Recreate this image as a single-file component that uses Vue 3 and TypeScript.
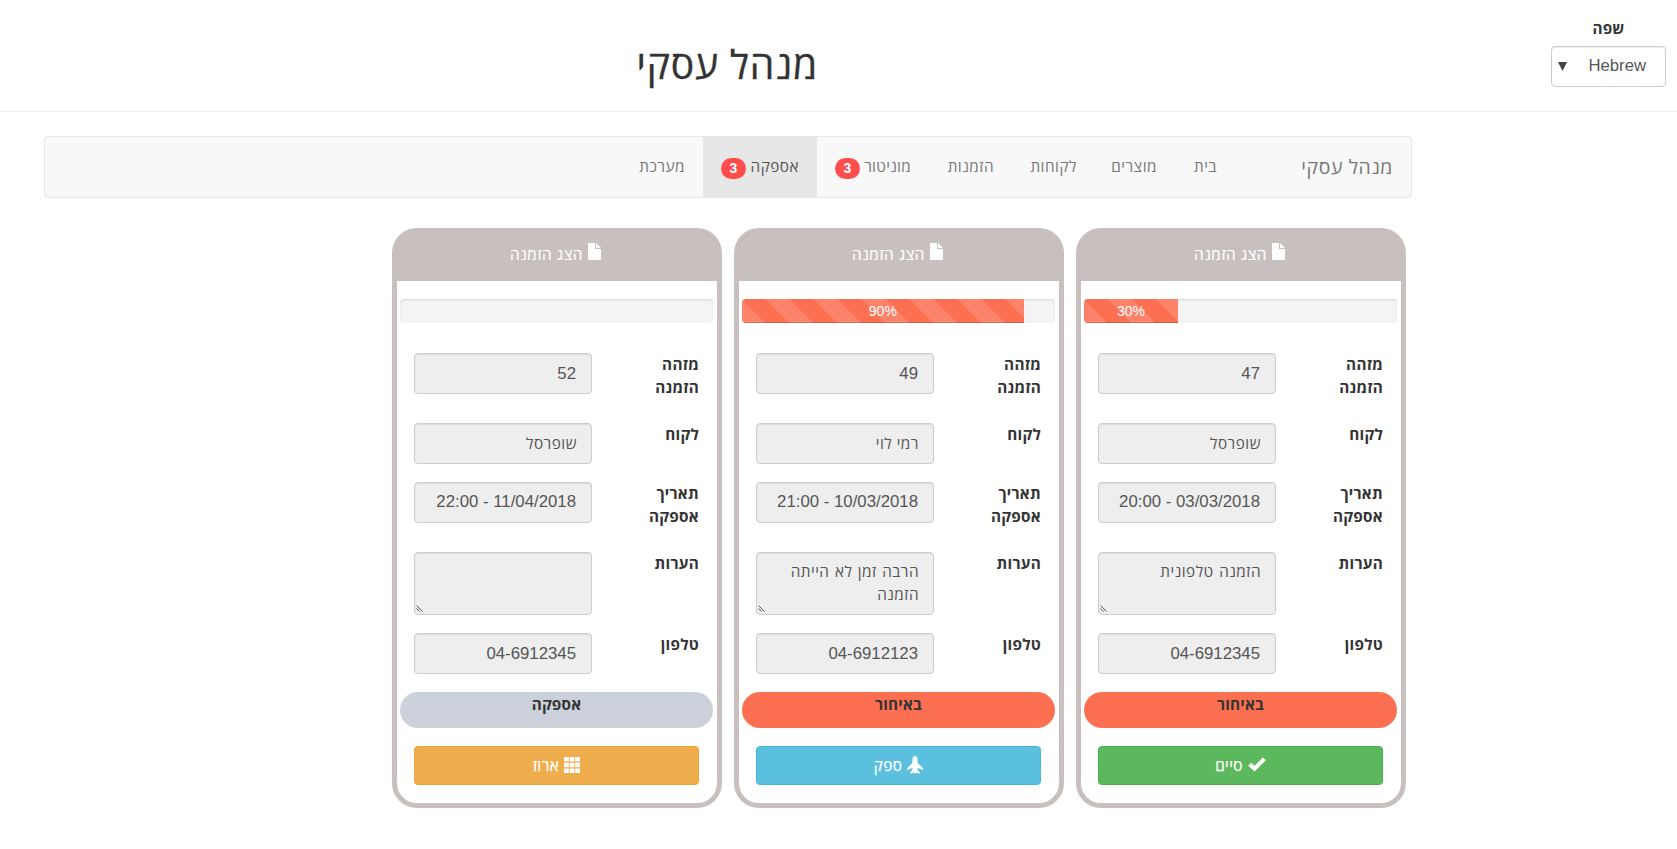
<script setup lang="ts">
interface NavItem { label: string; kind: string; badge?: number; active?: boolean }
interface Field { label: string; value: string; kind: string }
interface Order {
  progress: number
  fields: Field[]
  status: string
  statusKind: string
  action: string
  actionKind: 'success' | 'info' | 'warning'
}

const nav: NavItem[] = [
  { label: 'בית', kind: 'home' },
  { label: 'מוצרים', kind: 'products' },
  { label: 'לקוחות', kind: 'customers' },
  { label: 'הזמנות', kind: 'orders' },
  { label: 'מוניטור', kind: 'monitor', badge: 3 },
  { label: 'אספקה', kind: 'delivery', badge: 3, active: true },
  { label: 'מערכת', kind: 'system' },
]

function fields(id: string, customer: string, date: string, notes: string, phone: string): Field[] {
  return [
    { label: 'מזהה הזמנה', value: id, kind: 'number' },
    { label: 'לקוח', value: customer, kind: 'customer' },
    { label: 'תאריך אספקה', value: date, kind: 'date' },
    { label: 'הערות', value: notes, kind: 'notes' },
    { label: 'טלפון', value: phone, kind: 'phone' },
  ]
}

const ltrKinds = ['number', 'date', 'phone']

const orders: Order[] = [
  {
    progress: 30,
    fields: fields('47', 'שופרסל', '20:00 - 03/03/2018', 'הזמנה טלפונית', '04-6912345'),
    status: 'באיחור', statusKind: 'late', action: 'סיים', actionKind: 'success',
  },
  {
    progress: 90,
    fields: fields('49', 'רמי לוי', '21:00 - 10/03/2018', 'הרבה זמן לא הייתה הזמנה', '04-6912123'),
    status: 'באיחור', statusKind: 'late', action: 'ספק', actionKind: 'info',
  },
  {
    progress: 0,
    fields: fields('52', 'שופרסל', '22:00 - 11/04/2018', '', '04-6912345'),
    status: 'אספקה', statusKind: 'delivery', action: 'ארוז', actionKind: 'warning',
  },
]
</script>

<template>
  <div class="page" dir="rtl">
    <header class="top">
      <div class="language">
        <span class="language-label">שפה</span>
        <div class="select">
          <span>Hebrew</span>
          <svg width="9" height="9" viewBox="0 0 9 9"><path d="M0 0h9L4.5 9z" fill="#444" /></svg>
        </div>
      </div>
      <h1>מנהל עסקי</h1>
    </header>

    <nav class="navbar">
      <span class="brand">מנהל עסקי</span>
      <a v-for="n in nav" :key="n.kind" class="nav-item" :class="[n.kind, { active: n.active }]">
        <span>{{ n.label }}</span>
        <span v-if="n.badge" class="badge">{{ n.badge }}</span>
      </a>
    </nav>

    <main class="board">
      <section v-for="(o, i) in orders" :key="i" class="card">
        <div class="card-head">
          <svg width="13" height="17" viewBox="0 0 13 17">
            <path d="M0 0h7v6h6v11H0z" fill="#fff" />
            <path d="M8 0l5 5H8z" fill="#fff" />
          </svg>
          <span>הצג הזמנה</span>
        </div>
        <div class="progress" dir="ltr">
          <div v-if="o.progress" class="bar" :style="{ width: o.progress + '%' }">{{ o.progress }}%</div>
        </div>
        <div class="fields">
          <div v-for="f in o.fields" :key="f.label" class="row" :class="f.kind">
            <label>{{ f.label }}</label>
            <div class="control">
              <bdi :dir="ltrKinds.includes(f.kind) ? 'ltr' : 'rtl'">{{ f.value }}</bdi>
              <svg v-if="f.kind === 'notes'" class="grip" width="7" height="7" viewBox="0 0 7 7">
                <path d="M0.5 0.5l6 6M0.5 3.5l3 3" stroke="#555" fill="none" />
              </svg>
            </div>
          </div>
        </div>
        <div class="status" :class="o.statusKind">{{ o.status }}</div>
        <button class="action" :class="o.actionKind">
          <svg v-if="o.actionKind === 'success'" width="18" height="15" viewBox="0 0 18 15">
            <path d="M0.200 8.800L3.200 5.800L6.600 8.800L14.800 0.400L17.800 3.200L6.600 14.400z" fill="#fff" />
          </svg>
          <svg v-else-if="o.actionKind === 'info'" width="16" height="18" viewBox="0 0 16 18">
            <path d="M8 0c1.600 0 2.500 1.600 2.500 3.200v3.600L16 12.200v2l-5.500-2.400v2.200l2.300 2.300v1.500L9 16.400 8 17.800 7 16.400l-3.800 1.400v-1.500l2.300-2.300v-2.200L0 14.200v-2l5.500-5.400V3.200C5.500 1.600 6.400 0 8 0z" fill="#fff" />
          </svg>
          <svg v-else width="16" height="16" viewBox="0 0 16 16">
            <path d="M0 0h4.800v4.500H0zM5.600 0h4.800v4.500H5.600zM11.200 0H16v4.500h-4.800zM0 5.800h4.800v4.400H0zM5.600 5.800h4.800v4.400H5.600zM11.200 5.800H16v4.400h-4.800zM0 11.500h4.800V16H0zM5.600 11.500h4.800V16H5.600zM11.200 11.500H16V16h-4.800z" fill="#fff" />
          </svg>
          <span>{{ o.action }}</span>
        </button>
      </section>
    </main>
  </div>
</template>

<style>
body { background: #fff; }
</style>

<style scoped>
* { box-sizing: border-box; }
.page {
  width: 1677px;
  height: 849px;
  overflow: hidden;
  font: 15.3px/23px "Open Sans", "Liberation Sans", Arial, sans-serif;
  letter-spacing: 0.5px;
  color: #333;
}
.top {
  display: flex;
  height: 112px;
  border-bottom: 1px solid #eee;
  padding-right: 11px;
}
.language { width: 115px; padding-top: 17px; display: flex; flex-direction: column; }
.language-label { text-align: center; font-weight: 700; height: 29px; letter-spacing: 0.2px; }
.select {
  height: 41px;
  display: flex;
  align-items: center;
  justify-content: space-between;
  padding: 0 19px 2px 6px;
  border: 1px solid #ccc;
  border-radius: 4px;
  box-shadow: inset 0 1px 1px rgba(0, 0, 0, .075);
  color: #555;
  font-family: "Liberation Sans", Arial, sans-serif;
  font-size: 16.7px;
  letter-spacing: 0;
}
.select svg { margin-top: 2px; }
h1 { margin: 39px 733px 0 0; font-size: 39px; line-height: 50px; font-weight: 400; letter-spacing: 0.9px; white-space: nowrap; -webkit-text-stroke: 0.35px #333; }
.navbar {
  display: flex;
  width: 1368px;
  height: 62px;
  margin: 24px 265px 0 0;
  background: #f8f8f8;
  border: 1px solid #e7e7e7;
  border-radius: 4px;
  color: #777;
}
.brand { width: 176px; padding: 18px 18px 0 0; font-size: 19.4px; letter-spacing: 0.6px; white-space: nowrap; }
.nav-item { display: flex; align-items: flex-start; justify-content: space-between; padding: 18px 18px 0; white-space: nowrap; }
.home { width: 60px; }
.products { width: 80px; }
.customers { width: 83px; }
.orders { width: 83px; }
.monitor { width: 112px; letter-spacing: 0.3px; }
.nav-item.delivery { width: 114px; background: #e7e7e7; color: #555; }
.system { width: 81px; }
.badge {
  width: 25px;
  height: 21px;
  margin-top: 3px;
  border-radius: 11px;
  background: #ff4d4d;
  color: #fff;
  font: 700 14px/21px "Liberation Sans", Arial, sans-serif;
  letter-spacing: 0;
  text-align: center;
}
.board { display: flex; gap: 12px; padding: 30px 271px 0 0; }
.card {
  width: 330px;
  height: 580px;
  border: 5px solid #c8c0be;
  border-radius: 25px;
  flex: none;
}
.card-head {
  height: 48px;
  display: flex;
  justify-content: center;
  gap: 5px;
  padding: 10px 3px 0 0;
  border-radius: 19px 19px 0 0;
  background: #c8c0be;
  box-shadow: 0 0 0 1px #c5bcba;
  clip-path: inset(-1px -1px 0 -1px);
  color: #fff;
}
.card-head span { letter-spacing: 0.6px; -webkit-text-stroke: 0.2px #fff; }
.progress {
  width: 313px;
  height: 24px;
  margin: 18px 4px 0 0;
  border-radius: 4px;
  background: #f4f4f4;
  box-shadow: inset 0 1px 2px rgba(0, 0, 0, .12);
  overflow: hidden;
}
.bar {
  height: 24px;
  background: linear-gradient(45deg, rgba(255, 255, 255, .15) 25%, transparent 25%, transparent 50%, rgba(255, 255, 255, .15) 50%, rgba(255, 255, 255, .15) 75%, transparent 75%) 24px 0 / 48px 48px #fd6f51;
  box-shadow: inset 0 -1px 0 rgba(0, 0, 0, .15);
  color: #fff;
  font: 14px/24px "Liberation Sans", Arial, sans-serif;
  letter-spacing: 0;
  text-align: center;
}
.fields { padding: 30px 18px 0 17px; }
.row { display: flex; justify-content: space-between; height: 59px; }
.row.number, .row.date { height: 70px; }
.row.notes { height: 81px; }
.row label { width: 76px; font-weight: 700; letter-spacing: 0.25px; }
.control {
  position: relative;
  width: 178px;
  height: 41px;
  padding: 8px 14px;
  border: 1px solid #ccc;
  border-radius: 4px;
  background: #eee;
  box-shadow: inset 0 1px 1px rgba(0, 0, 0, .075);
  color: #555;
}
.number .control, .date .control, .phone .control {
  padding-right: 15px;
  font-family: "Liberation Sans", Arial, sans-serif;
  font-size: 16.8px;
  letter-spacing: 0;
  white-space: nowrap;
}
.date .control { padding-top: 7px; }
.notes .control { height: 63px; padding-top: 7px; word-spacing: 1px; }
.grip { position: absolute; left: 1px; bottom: 2px; }
.status {
  width: 313px;
  height: 36px;
  margin-right: 4px;
  padding-top: 1px;
  border-radius: 18px;
  text-align: center;
  font-weight: 700;
  letter-spacing: 0.2px;
}
.late { background: #fd6f51; }
.status.delivery { background: #cbd0da; }
.action {
  display: flex;
  justify-content: center;
  align-items: center;
  gap: 5px;
  width: 285px;
  height: 39px;
  margin: 18px 18px 0 0;
  border: 1px solid;
  border-radius: 4px;
  padding: 0 0 2px;
  color: #fff;
  font: inherit;
  letter-spacing: 0.4px;
}
.action span { padding-top: 1px; -webkit-text-stroke: 0.25px #fff; }
.success { background: #5cb85c; border-color: #4cae4c; }
.info { background: #5bc0de; border-color: #46b8da; }
.warning { background: #f0ad4e; border-color: #eea236; }
</style>
